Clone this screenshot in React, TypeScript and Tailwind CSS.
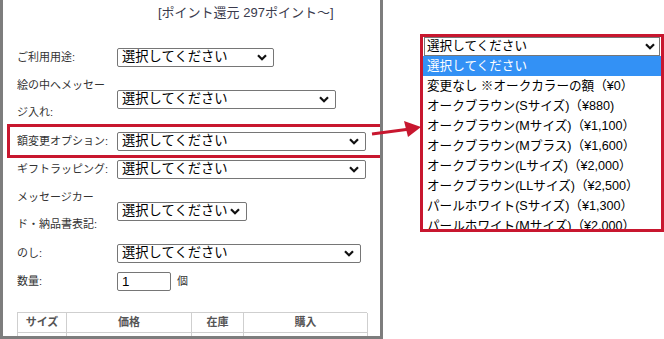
import React from 'react';

const RED = 'border-[#c8172f]';

const Chevron = () => (
  <svg width="10" height="7" viewBox="0 0 10 7" className="shrink-0">
    <polyline points="1,1.2 5,5.2 9,1.2" fill="none" stroke="#111" strokeWidth="2.2" />
  </svg>
);

const FakeSelect = ({ w, text = '選択してください' }: { w: string; text?: string }) => (
  <div
    className={`${w} h-[19px] border border-[#767676] rounded-[2px] bg-white flex items-center justify-between pl-[4px] pr-[6px] text-[13.3px] leading-none text-black`}
  >
    <span className="whitespace-nowrap">{text}</span>
    <Chevron />
  </div>
);

const Row = ({ label, children, tall }: { label: React.ReactNode; children: React.ReactNode; tall?: boolean }) => (
  <div className={`flex items-center ${tall ? 'h-[56px]' : 'h-[28px]'}`}>
    <div className="w-[100px] shrink-0 text-[11px] leading-[27px] text-[#333] whitespace-nowrap">{label}</div>
    {children}
  </div>
);

const options = [
  '変更なし ※オークカラーの額（¥0）',
  'オークブラウン(Sサイズ)（¥880)',
  'オークブラウン(Mサイズ)（¥1,100）',
  'オークブラウン(Mプラス)（¥1,600）',
  'オークブラウン(Lサイズ)（¥2,000）',
  'オークブラウン(LLサイズ)（¥2,500）',
  'パールホワイト(Sサイズ)（¥1,300）',
  'パールホワイト(Mサイズ)（¥2,000）',
];

export default function App() {
  return (
    <div
      className="relative w-[664px] h-[339px] bg-white flex overflow-hidden"
      style={{ fontFamily: '"Liberation Sans", "Noto Sans CJK JP", sans-serif' }}
    >
      {/* product form panel */}
      <div className="w-[383px] h-[339px] shrink-0 border-x-[3px] border-b-[3px] border-[#7d7d7d] overflow-hidden">
        <div className="pt-[4px] pl-[155px] text-[13px] leading-[17px] text-[#3a3a4c] whitespace-nowrap">
          [ポイント還元 297ポイント～]
        </div>

        <div className="mt-[22px] pl-[14px]">
          <Row label="ご利用用途:">
            <FakeSelect w="w-[157px]" />
          </Row>
          <Row
            tall
            label={
              <>
                絵の中へメッセー
                <br />
                ジ入れ:
              </>
            }
          >
            <FakeSelect w="w-[219px]" />
          </Row>
          <div className={`flex items-center h-[34px] -mx-[10px] -my-[3px] border-[3px] ${RED} pl-[7px]`}>
            <div className="w-[100px] shrink-0 text-[11px] leading-[27px] text-[#333] whitespace-nowrap">額変更オプション:</div>
            <FakeSelect w="w-[249px]" />
          </div>
          <Row label="ギフトラッピング:">
            <FakeSelect w="w-[249px]" />
          </Row>
          <Row
            tall
            label={
              <>
                メッセージカー
                <br />
                ド・納品書表記:
              </>
            }
          >
            <FakeSelect w="w-[130px]" />
          </Row>
          <Row label="のし:">
            <FakeSelect w="w-[244px]" />
          </Row>
          <Row label="数量:">
            <div className="w-[54px] h-[19px] border border-[#767676] rounded-[2px] pl-[4px] text-[13.3px] leading-[17px] text-black">
              1
            </div>
            <span className="ml-[6px] text-[11px] text-[#333]">個</span>
          </Row>

          <div className="mt-[17px] w-[350px] border-t border-l border-[#cfcfcf]">
            <div className="grid grid-cols-[49px_125px_52px_124px] h-[20px] text-[11px] font-bold text-[#555]">
              {['サイズ', '価格', '在庫', '購入'].map((h) => (
                <div key={h} className="flex items-center justify-center border-r border-b border-[#cfcfcf]">
                  {h}
                </div>
              ))}
            </div>
            <div className="grid grid-cols-[49px_125px_52px_124px] h-[20px]">
              {[0, 1, 2, 3].map((i) => (
                <div key={i} className="border-r border-[#cfcfcf]" />
              ))}
            </div>
          </div>
        </div>
      </div>

      {/* opened dropdown */}
      <div className={`ml-[37px] mt-[34px] w-[244px] h-[198px] shrink-0 border-[3px] ${RED} bg-white overflow-hidden`}>
        <div className="mx-[1px] h-[19px] border border-[#767676] bg-white flex items-center justify-between pl-[2px] pr-[4px] text-[12.6px] text-black">
          <span>選択してください</span>
          <Chevron />
        </div>
        <div className="text-[12.6px]">
          <div className="h-[20px] leading-[20px] pl-[4px] bg-[#3391f5] text-white">選択してください</div>
          {options.map((o) => (
            <div key={o} className="h-[20px] leading-[20px] pl-[4px] text-black whitespace-nowrap">
              {o}
            </div>
          ))}
        </div>
      </div>

      {/* annotation arrow */}
      <svg className="absolute left-[368px] top-[112px]" width="60" height="34" viewBox="0 0 60 34">
        <line x1="4" y1="22" x2="42" y2="17" stroke="#c8172f" strokeWidth="3" />
        <polygon points="53,15 36,9 40,25" fill="#c8172f" />
      </svg>
    </div>
  );
}
